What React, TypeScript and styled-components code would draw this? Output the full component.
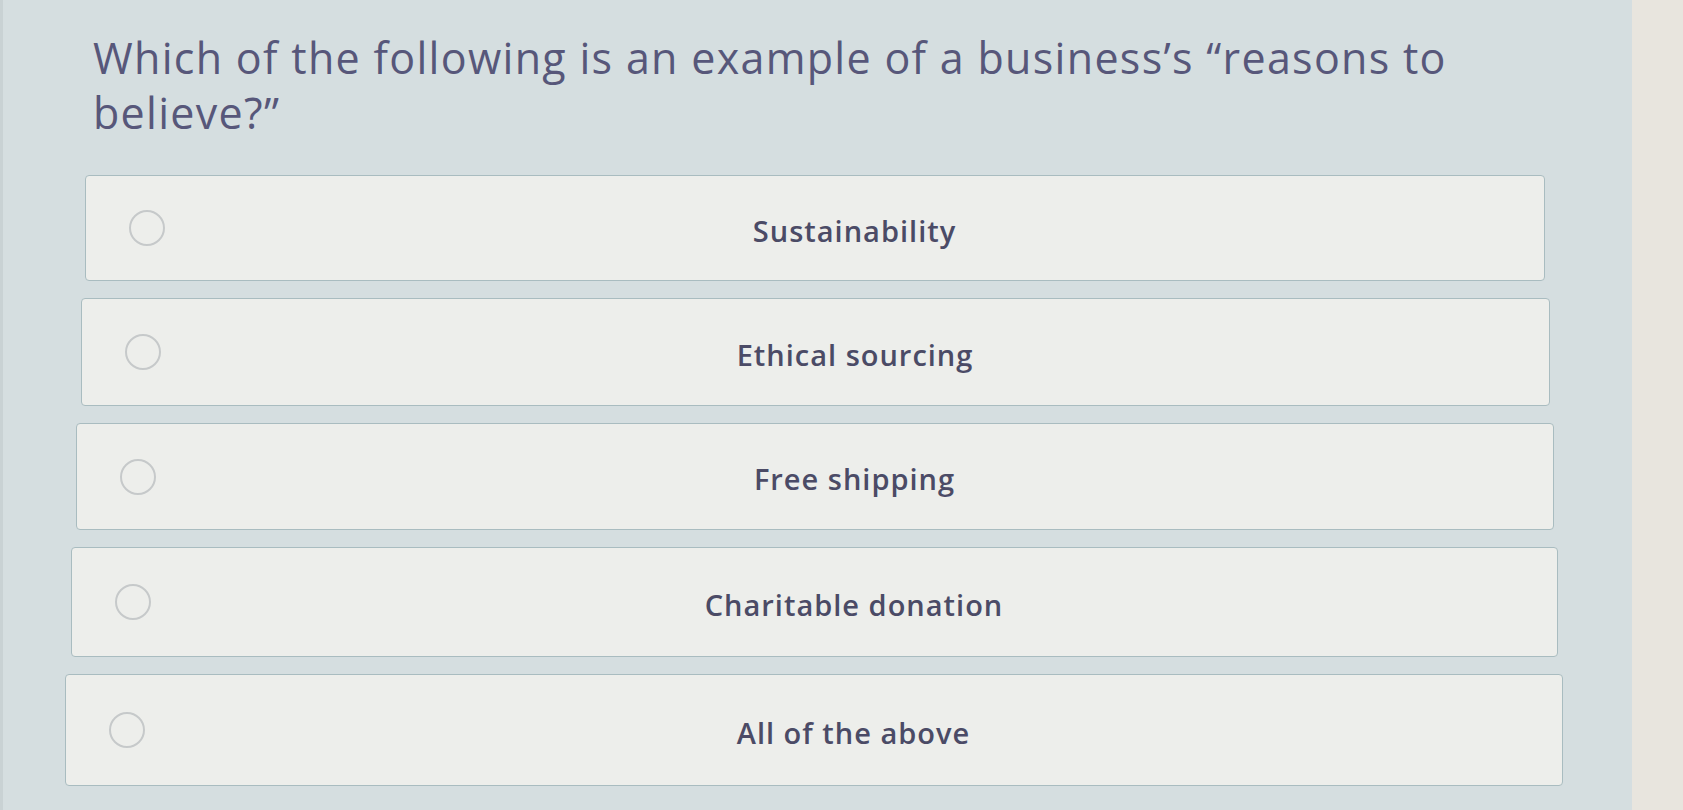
import React from "react";
import styled, { createGlobalStyle } from "styled-components";

const GlobalStyle = createGlobalStyle`
  html, body {
    margin: 0;
    padding: 0;
    background: #d6dfe1;
  }
  * { box-sizing: border-box; }
`;

const Page = styled.div`
  display: flex;
  width: 1683px;
  height: 810px;
  overflow: hidden;
  font-family: "Open Sans", "Liberation Sans", sans-serif;
`;

const Main = styled.main`
  flex: 1;
  background: #d5dee0;
  border-left: 3px solid #c9d2d4;
  padding-top: 30px;
  display: flex;
  flex-direction: column;
`;

const RightStrip = styled.div`
  width: 51px;
  background: #e8e5de;
`;

const Title = styled.h1`
  margin: 0 0 35px 90px;
  width: 1440px;
  font-size: 43px;
  line-height: 55px;
  font-weight: 400;
  color: #57577a;
  letter-spacing: 1.3px;
`;

const Options = styled.div`
  display: flex;
  flex-direction: column;
  gap: 17px;
`;

const Card = styled.label<{ $left: number; $width: number; $height: number }>`
  display: flex;
  align-items: center;
  margin-left: ${(p) => p.$left}px;
  width: ${(p) => p.$width}px;
  height: ${(p) => p.$height}px;
  padding-left: 43px;
  background: #edeeeb;
  border: 1.5px solid #a9bcc0;
  border-radius: 4px;
  cursor: pointer;
`;

const Radio = styled.span`
  flex: none;
  width: 36px;
  height: 36px;
  border-radius: 50%;
  border: 2.5px solid #c6c9ca;
`;

const Label = styled.span`
  flex: 1;
  text-align: center;
  font-size: 29px;
  font-weight: 600;
  color: #4b4b66;
  letter-spacing: 1px;
  padding-top: 4px;
`;

const options = [
  { text: "Sustainability", left: 82, width: 1460, height: 106 },
  { text: "Ethical sourcing", left: 78, width: 1469, height: 108 },
  { text: "Free shipping", left: 73, width: 1478, height: 107 },
  { text: "Charitable donation", left: 68, width: 1487, height: 110 },
  { text: "All of the above", left: 62, width: 1498, height: 112 },
];

export default function App() {
  return (
    <>
      <GlobalStyle />
      <Page>
        <Main>
          <Title>
            Which of the following is an example of a business’s “reasons to
            believe?”
          </Title>
          <Options>
            {options.map((o) => (
              <Card key={o.text} $left={o.left} $width={o.width} $height={o.height}>
                <Radio />
                <Label>{o.text}</Label>
              </Card>
            ))}
          </Options>
        </Main>
        <RightStrip />
      </Page>
    </>
  );
}
